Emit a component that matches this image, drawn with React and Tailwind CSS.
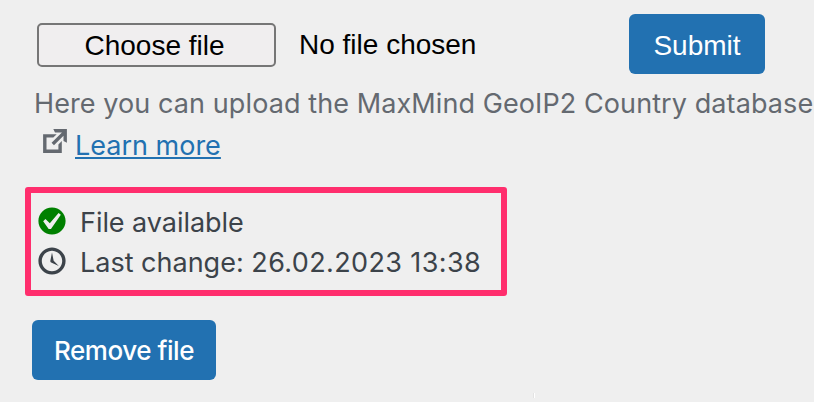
const EXTERNAL =
  "M9 3h8v8l-2-1V6.92l-5.6 5.59-1.41-1.41L14.08 5H10zm3 12v-3l2-2v7H3V6h8L9 8H5v7h7z";
const CHECK =
  "M10 2c-4.42 0-8 3.58-8 8s3.58 8 8 8 8-3.58 8-8-3.58-8-8-8zm-.615 12.66h-1.34l-3.24-4.54 1.341-1.25 2.569 2.4 5.141-5.931 1.34.94-5.81 8.38z";
const CLOCK =
  "M10 2c4.42 0 8 3.58 8 8s-3.58 8-8 8-8-3.58-8-8 3.58-8 8-8zm0 14c3.31 0 6-2.69 6-6s-2.69-6-6-6-6 2.69-6 6 2.69 6 6 6zm-.71-5.29c.07.05.14.1.23.15l-.02.02L14 13l-3.03-3.19L10 5l-.97 4.81h.01c0 .02-.01.05-.02.09S9 9.97 9 10c0 .28.1.52.29.71z";

function Icon({ path, className }) {
  return (
    <svg viewBox="0 0 20 20" fill="currentColor" className={`size-[34px] shrink-0 ${className}`}>
      <path d={path} />
    </svg>
  );
}

export default function App() {
  return (
    <main className="flex h-[402px] w-[814px] flex-col items-start overflow-hidden bg-[#efefef] font-['Inter',sans-serif] text-[27px] whitespace-nowrap text-[#3c434a]">
      <div className="mt-3.5 flex h-[60px] w-full items-center pl-[37px] font-['Liberation_Sans',Arial,sans-serif] text-[28px] text-black">
        <button className="mt-0.5 h-11 w-[239px] rounded-[5px] border-2 border-[#767676] bg-[#f0eeef] pt-px pr-1 leading-10">
          Choose file
        </button>
        <span className="ml-[23px] w-[330px] pt-0.5 leading-10">No file chosen</span>
        <button className="h-[60px] w-[136px] rounded-md bg-[#2271b1] pt-1 text-white">Submit</button>
      </div>
      <p className="mt-2.5 ml-[34px] h-[39px] leading-10 tracking-[0.09px] text-[#646970]">
        Here you can upload the MaxMind GeoIP2 Country database
      </p>
      <div className="flex h-[42px] items-start pl-[38px] text-[#646970]">
        <Icon path={EXTERNAL} className="mt-px" />
        <a href="#" className="ml-[3px] pt-[3px] leading-10 text-[#2271b1] underline decoration-2 underline-offset-2">
          Learn more
        </a>
      </div>
      <section className="mt-[22px] ml-[25px] flex h-[109px] w-[482px] flex-col rounded-[3px] border-6 border-[#ff2e6d] pt-2 pl-1">
        <div className="flex h-10 items-center">
          <Icon path={CHECK} className="text-[#008000]" />
          <span className="ml-[11px] pt-1 tracking-[-0.05px]">File available</span>
        </div>
        <div className="flex h-10 items-center">
          <Icon path={CLOCK} className="" />
          <span className="ml-[11px] pt-1">
            Last change: <span className="tracking-[0.38px]">26.02.2023 13:38</span>
          </span>
        </div>
      </section>
      <button className="mt-6 ml-8 h-[60px] w-[184px] rounded-md bg-[#2271b1] text-[26px] font-medium tracking-[-0.45px] text-white">
        Remove file
      </button>
      <i className="mt-[13px] ml-[533px] h-[5px] w-0.5 border-r border-l border-r-white border-l-[#e3e3e3]" />
    </main>
  );
}
